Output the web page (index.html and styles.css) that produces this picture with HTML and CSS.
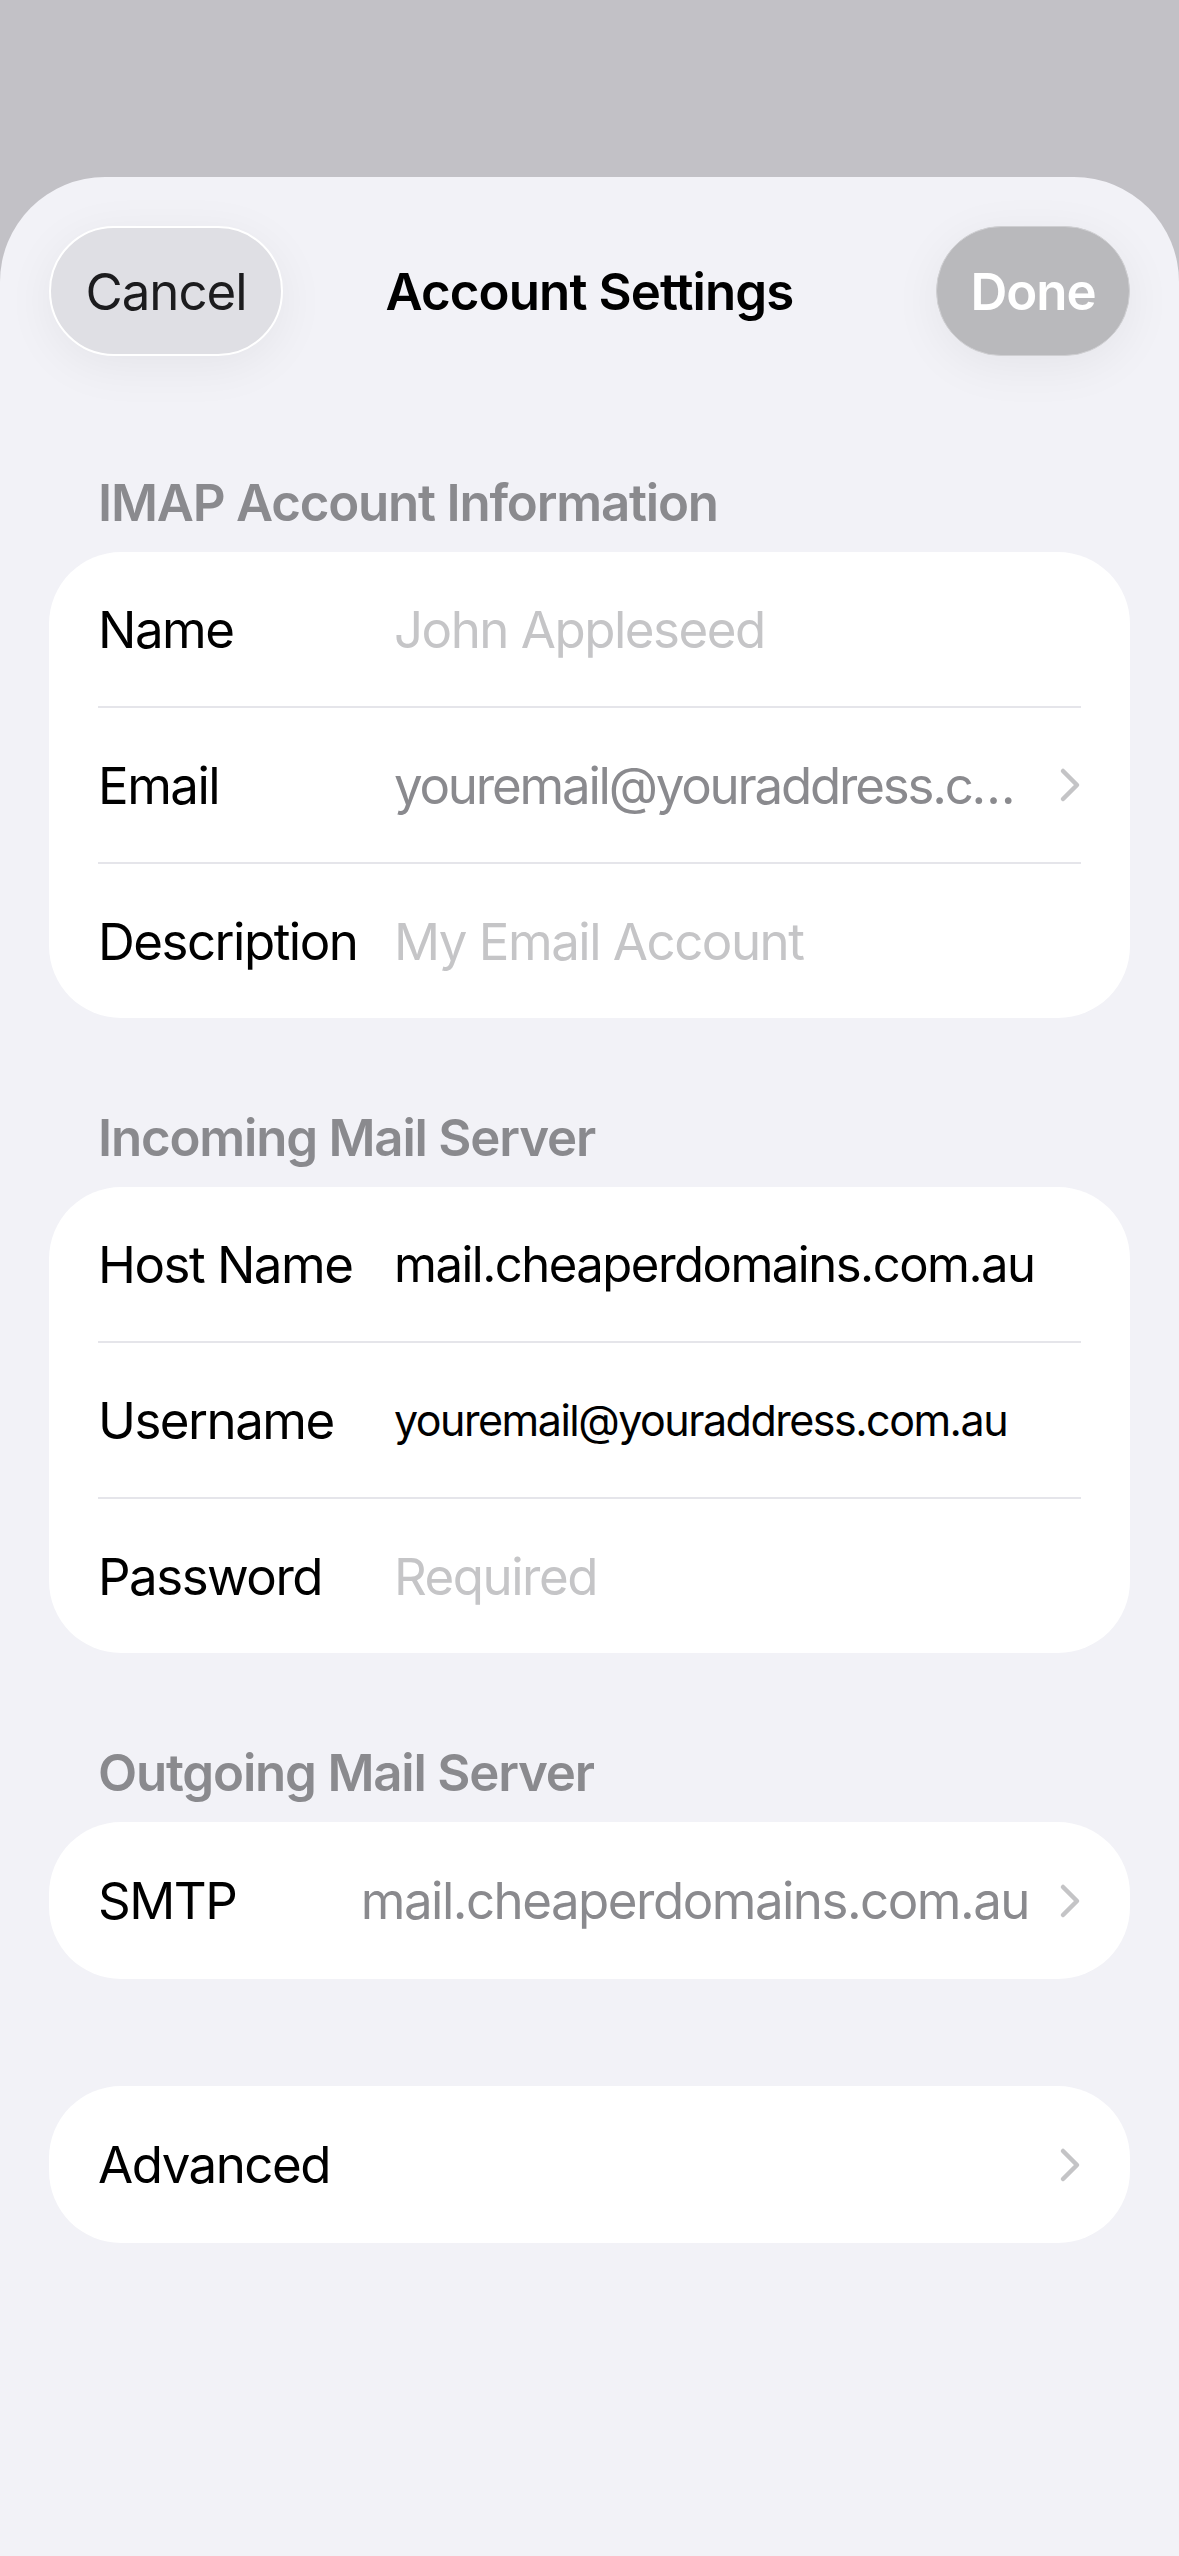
FILE: index.html
```html
<!DOCTYPE html>
<html lang="en">
<head>
  <meta charset="UTF-8">
  <meta name="viewport" content="width=device-width, initial-scale=1.0">
  <title>Account Settings</title>
  <link rel="stylesheet" href="styles.css">
</head>
<body>

  <div class="sheet">

    <header class="nav">
      <button class="nav-btn cancel">Cancel</button>
      <h1 class="nav-title">Account Settings</h1>
      <button class="nav-btn done">Done</button>
    </header>

    <section class="group first">
      <h2 class="group-title">IMAP Account Information</h2>
      <div class="card">
        <div class="row">
          <span class="label">Name</span>
          <span class="value placeholder">John Appleseed</span>
        </div>
        <div class="row">
          <span class="label">Email</span>
          <span class="value muted email">youremail@youraddress.c…</span>
          <svg class="chevron" viewBox="0 0 22 36"><path d="M4 4 L18 18 L4 32"/></svg>
        </div>
        <div class="row">
          <span class="label">Description</span>
          <span class="value placeholder">My Email Account</span>
        </div>
      </div>
    </section>

    <section class="group">
      <h2 class="group-title">Incoming Mail Server</h2>
      <div class="card">
        <div class="row">
          <span class="label">Host Name</span>
          <span class="value host">mail.cheaperdomains.com.au</span>
        </div>
        <div class="row">
          <span class="label">Username</span>
          <span class="value small">youremail@youraddress.com.au</span>
        </div>
        <div class="row">
          <span class="label">Password</span>
          <span class="value placeholder">Required</span>
        </div>
      </div>
    </section>

    <section class="group">
      <h2 class="group-title">Outgoing Mail Server</h2>
      <div class="card">
        <div class="row single">
          <span class="label auto">SMTP</span>
          <span class="value muted right">mail.cheaperdomains.com.au</span>
          <svg class="chevron" viewBox="0 0 22 36"><path d="M4 4 L18 18 L4 32"/></svg>
        </div>
      </div>
    </section>

    <section class="group last">
      <div class="card">
        <div class="row single">
          <span class="label auto">Advanced</span>
          <span class="value"></span>
          <svg class="chevron" viewBox="0 0 22 36"><path d="M4 4 L18 18 L4 32"/></svg>
        </div>
      </div>
    </section>

  </div>

</body>
</html>
```

FILE: styles.css
```css
body {
  margin: 0;
  background: #c2c1c6;
  font-family: 'Inter', 'Roboto', sans-serif;
  color: #000;
}

.sheet {
  margin-top: 177px;
  min-height: 2379px;
  background: #f2f2f7;
  border-radius: 105px 105px 0 0;
  box-sizing: border-box;
  padding: 49px 49px 0 49px;
}

/* top bar */
.nav {
  display: grid;
  grid-template-columns: 1fr auto 1fr;
  align-items: center;
}

.nav-btn {
  height: 130px;
  border-radius: 65px;
  font-family: inherit;
  font-size: 51px;
  letter-spacing: -1px;
  padding: 0;
  box-shadow: 0 10px 50px rgba(0, 0, 0, 0.06);
}

.cancel {
  justify-self: start;
  width: 234px;
  background: #dfdfe4;
  border: 2px solid #fff;
  color: #1c1c1e;
}

.done {
  justify-self: end;
  width: 194px;
  background: #b9b9bc;
  border: 1px solid #cfcfd2;
  color: #fff;
  font-weight: 600;
}

.nav-title {
  margin: 0;
  font-size: 51px;
  font-weight: 600;
  letter-spacing: -0.9px;
}

/* groups */
.group {
  margin-top: 90px;
}

.group.first {
  margin-top: 117px;
}

.group.last {
  margin-top: 107px;
}

.group-title {
  margin: 0 0 19px 49px;
  line-height: 60px;
  font-size: 51px;
  font-weight: 600;
  color: #8a8a8e;
  letter-spacing: -1.2px;
}

.card {
  background: #fff;
  border-radius: 72px;
  padding: 0 49px;
}

.row {
  display: flex;
  align-items: center;
  height: 154px;
  font-size: 51px;
  letter-spacing: -1.5px;
}

.row + .row {
  border-top: 2px solid #e5e5ea;
}

.row.single {
  height: 157px;
}

.label {
  flex: none;
  width: 296px;
  white-space: nowrap;
}

.label.auto {
  width: auto;
  margin-right: 40px;
}

.value {
  flex: 1;
  min-width: 0;
  white-space: nowrap;
  overflow: hidden;
  text-overflow: ellipsis;
}

.value.right {
  text-align: right;
}

.value.placeholder {
  color: #c5c5c7;
}

.value.muted {
  color: #8a8a8e;
}

.value.email {
  letter-spacing: -2.2px;
}

.value.host {
  font-size: 49px;
}

.value.small {
  font-size: 43px;
}

.chevron {
  flex: none;
  width: 22px;
  height: 36px;
  margin-left: 30px;
  fill: none;
  stroke: #c4c4c6;
  stroke-width: 4.5;
  stroke-linecap: round;
  stroke-linejoin: round;
}
```
